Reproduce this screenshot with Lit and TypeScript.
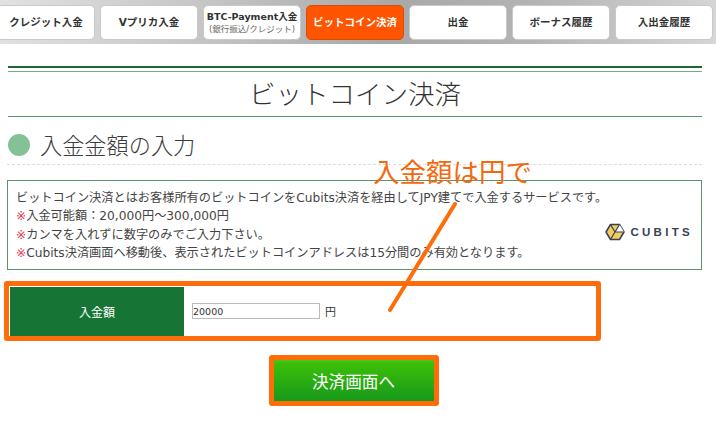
import { LitElement, html, css } from "lit";
import { customElement } from "lit/decorators.js";

@customElement("app-root")
export class AppRoot extends LitElement {
  static styles = css`
    :host { display: block; position: relative; width: 716px; height: 436px; overflow: hidden; background: #fff; font-family: "DejaVu Sans", "Noto Sans CJK JP", sans-serif; color: #333; }
    .nav { height: 44px; box-sizing: border-box; padding: 5px 0 4px 0; margin-left: -3px; width: 719px; display: flex; gap: 5px;
      background: linear-gradient(100deg, #e2e2e2 0%, #c4c4c4 30%, #a8a8a8 55%, #b4b4b4 75%, #d6d6d6 100%); }
    .tab { flex: 0 0 98px; box-sizing: border-box; height: 35px; background: #fff; border: 1px solid #c9c9c9; border-radius: 5px; display: flex; flex-direction: column; align-items: center; justify-content: center;
      font-size: 10.5px; font-weight: 700; color: #333; white-space: nowrap; line-height: 13px; }
    .tab .lat { font-size: 9.5px; }
    .tab small { font-size: 8.5px; font-weight: 400; color: #666; line-height: 12px; }
    .tab.on { background: #ff5400; color: #fff; border-color: #e04a00; }
    .main { padding: 22px 14px 0 7px; }
    .rule { height: 6px; border-top: 2px solid #1c6a30; border-bottom: 1px solid #6fae82; box-sizing: border-box; margin-left: 1px; }
    h1 { margin: 0 0 0 1px; height: 45px; box-sizing: border-box; border-bottom: 1px solid #5c9469; font-size: 26.5px; font-weight: 300; text-align: center; line-height: 41px; color: #333; font-family: "Noto Sans CJK JP", sans-serif; }
    .sec { margin-top: 15px; height: 33px; display: flex; align-items: center; gap: 10px; border-bottom: 1px dashed #ddd; box-sizing: border-box; padding: 0 0 6px 1px; }
    .dot { width: 22px; height: 22px; border-radius: 50%; background: #85c196; }
    h2 { margin: -2px 0 0; font-size: 22.2px; font-weight: 300; color: #3c3c3c; font-family: "Noto Sans CJK JP", sans-serif; line-height: 28px; }
    .info { margin-top: 15px; box-sizing: border-box; height: 90px; border: 1px solid #5c9469; padding: 8px 8px 6px; display: flex; font-size: 12.2px; line-height: 18.3px; color: #444; position: relative; white-space: nowrap; }
    .info i { font-style: normal; color: #e0405a; }
    .logo { position: absolute; right: 8px; top: 41px; display: flex; align-items: center; gap: 5px; font-size: 11.5px; font-weight: 700; letter-spacing: 3.3px; color: #3a3f55; font-family: "Liberation Sans", sans-serif; }
    .frame { margin: 11px 101px 0 -3px; height: 60px; box-sizing: border-box; border: 5px solid #ff6d0a; border-radius: 3px; display: flex; }
    .frame .th { width: 174px; margin: 1px 0 0 1px; height: 49px; background: #167535; color: #fff; font-size: 12px; display: flex; align-items: center; justify-content: center; }
    .frame .td { display: flex; align-items: center; padding-left: 8px; gap: 5px; font-size: 11px; color: #333; }
    input { width: 128px; height: 16px; box-sizing: border-box; border: 1px solid #bbb; padding: 0; font: 9.5px "DejaVu Sans", sans-serif; color: #333; margin: 0; }
    .cta-wrap { display: flex; justify-content: center; margin: 14px 0 0 0; padding-right: 2px; }
    .cta { width: 170px; height: 51px; box-sizing: border-box; border: 5px solid #ff6d0a; border-radius: 3px; background: linear-gradient(#4cc41a 0, #3cbf08 8%, #16991a 100%); color: #fff; font-size: 16.6px; font-weight: 400; display: flex; align-items: center; justify-content: center; font-family: "Noto Sans CJK JP", sans-serif; }
    .note { position: absolute; left: 373px; top: 152px; font-size: 26.5px; line-height: 38px; color: #f26a0f; font-family: "Noto Sans CJK JP", sans-serif; white-space: nowrap; }
    .arrow { position: absolute; left: 0; top: 0; pointer-events: none; }
  `;

  render() {
    return html`
      <div class="nav">
        <div class="tab">クレジット入金</div>
        <div class="tab">Vプリカ入金</div>
        <div class="tab"><span class="lat">BTC-Payment入金</span><small>(銀行振込/クレジット)</small></div>
        <div class="tab on">ビットコイン決済</div>
        <div class="tab">出金</div>
        <div class="tab">ボーナス履歴</div>
        <div class="tab">入出金履歴</div>
      </div>
      <div class="main">
        <div class="rule"></div>
        <h1>ビットコイン決済</h1>
        <div class="sec"><span class="dot"></span><h2>入金金額の入力</h2></div>
        <div class="info">
          <div>
            ビットコイン決済とはお客様所有のビットコインをCubits決済を経由してJPY建てで入金するサービスです。<br />
            <i>※</i>入金可能額：20,000円～300,000円<br />
            <i>※</i>カンマを入れずに数字のみでご入力下さい。<br />
            <i>※</i>Cubits決済画面へ移動後、表示されたビットコインアドレスは15分間のみ有効となります。
          </div>
          <div class="logo">
            <svg width="20" height="20" viewBox="0 0 20 20">
              <path d="M5.5 2.5h9L19 10l-4.5 7.5h-9L1 10z" fill="#f0cd5e" stroke="#3a3f55" stroke-width="1.5" stroke-linejoin="round" />
              <path d="M10 10l4.5-7.5L19 10z" fill="#fff" />
              <path d="M10 10L5.5 2.5M10 10h9M10 10l-4.5 7.5M10 10l4.5-7.5" stroke="#3a3f55" stroke-width="1.2" fill="none" />
            </svg>
            <span>CUBITS</span>
          </div>
        </div>
        <div class="frame">
          <div class="th">入金額</div>
          <div class="td"><input .value=${"20000"} /><span>円</span></div>
        </div>
        <div class="cta-wrap"><div class="cta">決済画面へ</div></div>
      </div>
      <div class="note">入金額は円で</div>
      <svg class="arrow" width="716" height="436">
        <line x1="455" y1="204" x2="390" y2="310" stroke="#ff6d0a" stroke-width="4" stroke-linecap="round" />
      </svg>
    `;
  }
}
